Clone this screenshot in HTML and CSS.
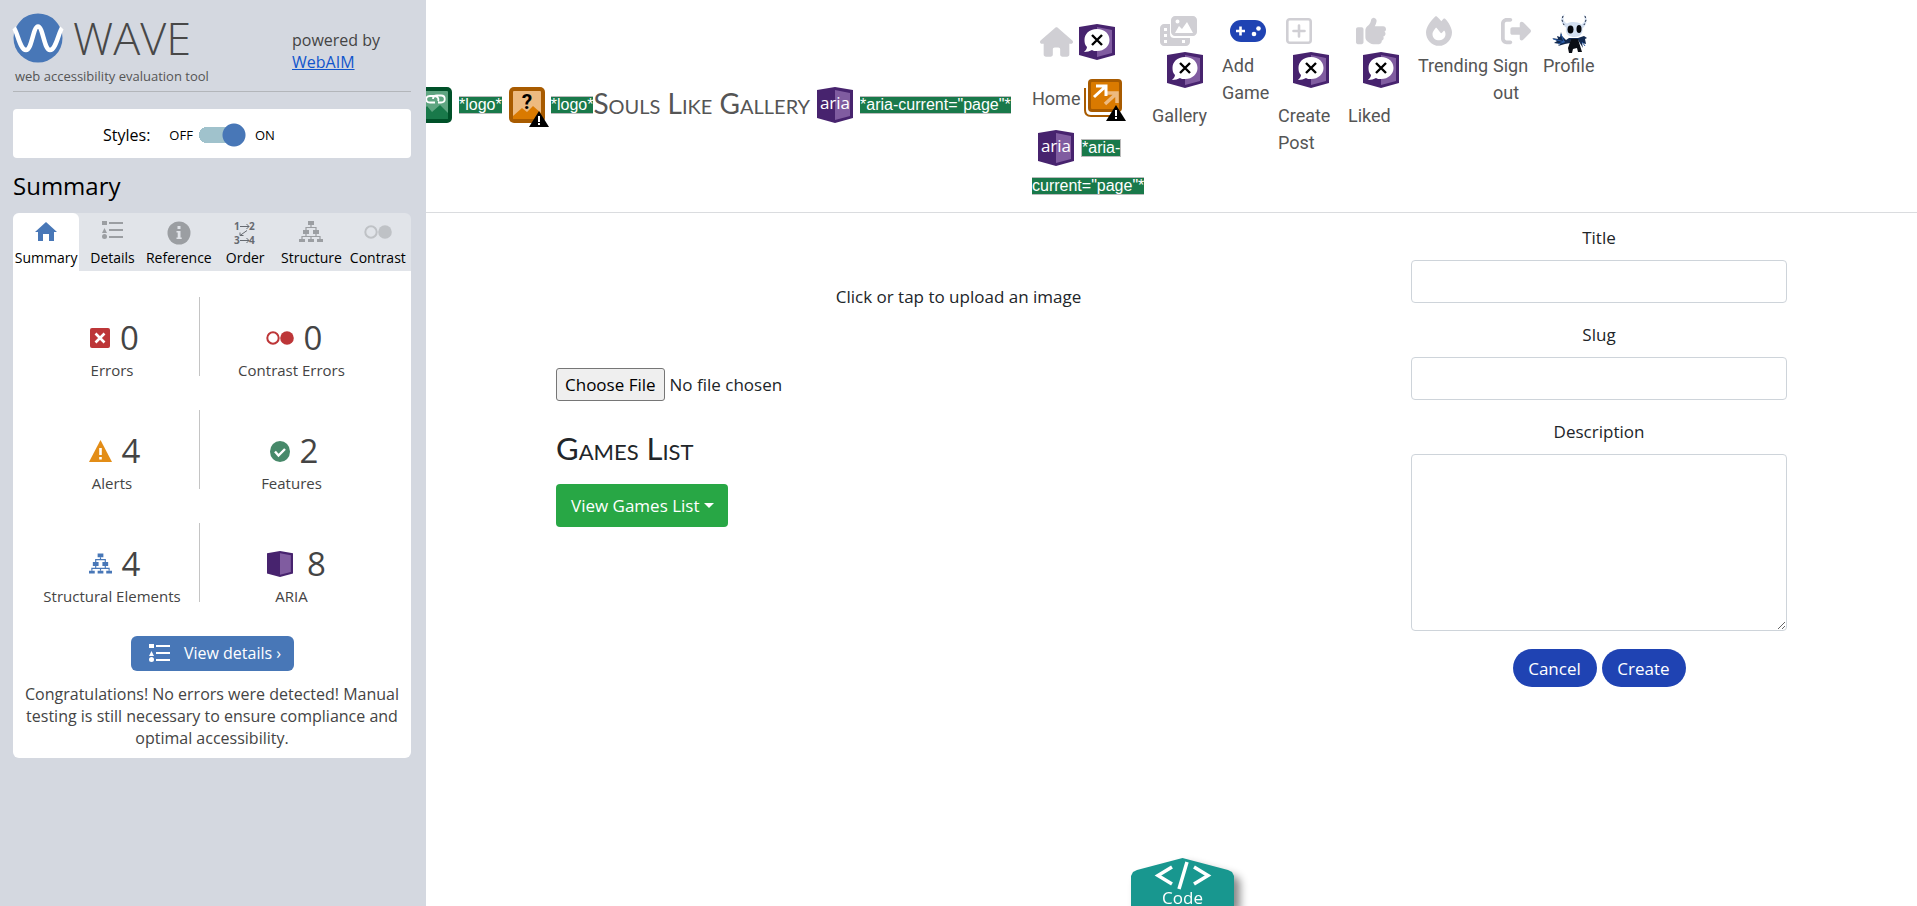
FILE: index.html
```html
<!DOCTYPE html>
<html lang="en">
<head>
<meta charset="utf-8">
<title>Souls Like Gallery</title>
<link rel="stylesheet" href="styles.css">
</head>
<body>
<svg class="defs" aria-hidden="true">
  <symbol id="list" viewBox="0 0 21 18"><path d="M0 0h5v4H0zM2.500 7l2.500 5H0zM7 1h14v2H7zM7 8h14v2H7zM7 15h14v2H7z"/><circle cx="2.500" cy="15.500" r="2.500"/></symbol>
  <symbol id="tree" viewBox="0 0 24 22"><path d="M9 0h6v4H9zM4 9h6v4H4zM14 9h6v4h-6zM0 18h6v3H0zM9 18h6v3H9zM18 18h6v3h-6z"/><path d="M12 4v3M7 9V6.500h10V9M7 13v2.500M17 13v2.500M3 18v-2.500h18V18M12 15v3" fill="none" stroke="currentColor" stroke-width="1.200"/></symbol>
  <symbol id="rings" viewBox="0 0 28 14"><circle cx="7" cy="7" r="5.700" fill="none" stroke="currentColor" stroke-width="2"/><circle cx="21" cy="7" r="6.800"/></symbol>
  <symbol id="shield" viewBox="0 0 36 36"><path d="M0 3L18 0l18 3v28l-18 5-18-5z" fill="#47236e"/><path d="M18 3l15 3v23l-15 4z" fill="#805ca0"/></symbol>
  <symbol id="aria-x" viewBox="0 0 36 36"><use href="#shield"/><path d="M18 5c8 0 12.500 5 12.500 11s-5 11-12.500 11c-2 0-4 0-5-1-2 1-5 2-8 2 1-1 3-3 3-5-2-2-2.500-4-2.500-7C5.500 10 10 5 18 5z" fill="#fff"/><path d="M13 11l10 10M23 11L13 21" stroke="#000" stroke-width="2.400"/></symbol>
  <symbol id="warn" viewBox="0 0 20 16"><path d="M10 0l10 16H0z" fill="#000"/><path d="M9 5h2v6H9zM9 12h2v2H9z" fill="#fff"/></symbol>
</svg>
<div class="layout">
<aside class="side">
  <header class="side-head">
    <div class="logo">
      <div class="logo-row">
        <svg class="logo-mark" viewBox="0 0 50 50"><circle cx="25" cy="25" r="24.500" fill="#4877b7"/><path d="M1 15C4 18 7 37 13 37S20 13.500 25 13.500 31 37 37 37 46 18 49 15" fill="none" stroke="#fff" stroke-width="4.500"/></svg>
        <span class="logo-name">WAVE</span>
      </div>
      <p class="tagline">web accessibility evaluation tool</p>
    </div>
    <p class="powered">powered by<br><a href="#">WebAIM</a></p>
  </header>
  <div class="styles-box">
    <span class="styles-label">Styles:</span>
    <label class="toggle">OFF <input type="checkbox" role="switch" checked aria-label="Styles"> ON</label>
  </div>
  <h2 class="side-title">Summary</h2>
  <nav class="tabs">
    <button class="tab active"><svg width="24" height="22" viewBox="0 0 24 22"><path d="M12 1l11 10h-3v9h-5v-7H9v7H4v-9H1z"/></svg>Summary</button>
    <button class="tab"><svg width="21" height="18"><use href="#list"/></svg>Details</button>
    <button class="tab"><svg width="24" height="24" viewBox="0 0 24 24"><circle cx="12" cy="12" r="11.500"/><path d="M10.500 5h3v3h-3zM9.500 10h4v6.500h1.200V18H9.500v-1.500h1.200v-5H9.500z" fill="#e1e4e9"/></svg>Reference</button>
    <button class="tab"><svg class="order" width="24" height="24" viewBox="0 0 24 24"><g font-family="Open Sans, sans-serif" font-size="10" font-weight="700"><text x="1" y="9">1</text><text x="16" y="9">2</text><text x="1" y="23">3</text><text x="16" y="23">4</text></g><path d="M7 5.500h9M13.500 3l2.500 2.500L13.500 8M7 19.500h9M13.500 17l2.500 2.500-2.500 2.500M14 9.500l-7 5M7 11.500v3h3.500" fill="none" stroke="currentColor"/></svg>Order</button>
    <button class="tab"><svg width="24" height="22"><use href="#tree"/></svg>Structure</button>
    <button class="tab pale"><svg width="28" height="22"><use href="#rings"/></svg>Contrast</button>
  </nav>
  <section class="panel">
    <ul class="stats">
      <li><span class="stat"><svg width="20" height="20" viewBox="0 0 20 20"><rect width="20" height="20" rx="2" fill="#bd3638"/><path d="M5.500 5.500l9 9M14.500 5.500l-9 9" stroke="#fff" stroke-width="2.600"/></svg>0</span>Errors</li>
      <li><span class="stat"><svg class="red" width="28" height="14"><use href="#rings"/></svg>0</span>Contrast Errors</li>
      <li><span class="stat"><svg width="23" height="22" viewBox="0 0 23 22"><path d="M11.500 0L23 22H0z" fill="#e38d17"/><path d="M10.200 8h2.600v7h-2.600zM10.200 17h2.600v2.500h-2.600z" fill="#fff"/></svg>4</span>Alerts</li>
      <li><span class="stat"><svg width="20" height="21" viewBox="0 0 20 21"><ellipse cx="10" cy="10.500" rx="10" ry="10.500" fill="#47896a"/><path d="M5 10.500l3.500 4L15 8" fill="none" stroke="#fff" stroke-width="2.400"/></svg>2</span>Features</li>
      <li><span class="stat"><svg class="blue" width="23" height="22"><use href="#tree"/></svg>4</span>Structural Elements</li>
      <li><span class="stat wide"><svg width="26" height="26"><use href="#shield"/></svg>8</span>ARIA</li>
    </ul>
    <button class="details"><svg width="21" height="18"><use href="#list"/></svg>View details ›</button>
    <p class="congrats">Congratulations! No errors were detected! Manual testing is still necessary to ensure compliance and optimal accessibility.</p>
  </section>
</aside>

<div class="page">
  <header class="top">
    <a class="brand" href="#">
      <svg width="36" height="36" viewBox="0 0 36 36"><rect width="36" height="36" rx="5" fill="#005129"/><rect x="4" y="4" width="28" height="28" rx="1" fill="#5fa581"/><path d="M4 27l7-8 5 6 8-7 8 8v6H4z" fill="#19794a"/><path d="M19 15.500h-5c-5 0-5-6.500 0-6.500h4c4 0 5 3 4 5M17 12c0-3 2-3.500 4-3.500h4c5 0 5 7 0 7h-3" fill="none" stroke="#fff" stroke-width="1.800"/></svg>
      <span class="tag">*logo*</span>
      <span class="flagged"><svg width="36" height="36" viewBox="0 0 36 36"><rect width="36" height="36" rx="5" fill="#a85b00"/><rect x="4" y="4" width="28" height="28" rx="1" fill="#edba80"/><path d="M4 29l9-8 5 4 6-6 8 7v6H4z" fill="#da7a00"/><text x="18" y="22" text-anchor="middle" font-family="Roboto, sans-serif" font-weight="700" font-size="21" fill="#000">?</text></svg><svg class="warn" width="20" height="16"><use href="#warn"/></svg></span>
      <span class="name"><span class="tag">*logo*</span><span class="site">Souls Like Gallery</span></span>
      <svg width="36" height="36"><use href="#shield"/><text class="aria-text" x="18" y="22" text-anchor="middle">aria</text></svg>
      <span class="tag">*aria-current="page"*</span>
    </a>
    <nav class="menu">
      <a href="#" class="item home">
        <span class="pair"><svg class="fa" width="33" height="30" viewBox="0 0 576 512"><path d="M575.800 255.500c0 18-15 32.100-32 32.100h-32l.7 160.200c0 2.700-.2 5.400-.5 8.100V472c0 22.100-17.900 40-40 40H392c-22.100 0-40-17.900-40-40v-88c0-17.700-14.300-32-32-32h-64c-17.700 0-32 14.300-32 32v88c0 22.100-17.900 40-40 40h-80c-22.100 0-40-17.900-40-40V287.600H32c-18 0-32-14-32-32.100 0-9 3-17 10-24L266.400 8c7-7 15-8 22-8s15 2 21 7L564.800 231.500c8 7 12 15 11 24z"/></svg><svg width="36" height="36"><use href="#aria-x"/></svg></span>
        <span class="home-label">Home <span class="flagged"><svg width="38" height="38" viewBox="0 0 38 38"><path d="M1 9v22c0 4 2 6 6 6h22" fill="none" stroke="#a85b00" stroke-width="2"/><rect x="4" width="34" height="33" rx="4" fill="#a85b00"/><rect x="7" y="3" width="28" height="27" rx="1" fill="#da7a00"/><path d="M21 25l11-10M23 14h10v10" fill="none" stroke="#edba80" stroke-width="3.500"/><path d="M10 18L21 8M12 7h10v10" fill="none" stroke="#fff" stroke-width="3"/></svg><svg class="warn" width="20" height="16"><use href="#warn"/></svg></span></span>
        <span class="aria-label-line"><svg width="36" height="36"><use href="#shield"/><text class="aria-text" x="18" y="22" text-anchor="middle">aria</text></svg><span class="tag">*aria-</span></span>
        <span class="tag">current="page"*</span>
      </a>
      <a href="#" class="item"><svg class="fa" width="38" height="30" viewBox="0 0 38 30"><path d="M4 8h6v10c0 3 2 4 4 4h16v4c0 2-2 4-4 4H4c-2 0-4-2-4-4V12c0-2 2-4 4-4zM4 12v3h3v-3zM4 18v3h3v-3zM4 24v3h3v-3zM22 24v3h3v-3z" fill-rule="evenodd"/><path d="M15 0h18c2 0 4 2 4 4v12c0 2-2 4-4 4H15c-2 0-4-2-4-4V4c0-2 2-4 4-4zM15 17h18l-6-11-5 7-3-3zM17.500 3.500a2 2 0 100 4 2 2 0 000-4z" fill-rule="evenodd"/></svg><svg class="x" width="36" height="36"><use href="#aria-x"/></svg><span class="label">Gallery</span></a>
      <a href="#" class="item"><svg class="fa current" width="36" height="30" viewBox="0 0 36 30"><rect y="4" width="36" height="22" rx="11"/><path d="M6 15h9M10.500 10.500v9" stroke="#fff" stroke-width="2.600"/><circle cx="24" cy="18" r="2.300" fill="#fff"/><circle cx="28.500" cy="12.500" r="2.300" fill="#fff"/></svg><span class="label">Add Game</span></a>
      <a href="#" class="item"><svg class="fa" width="26" height="30" viewBox="0 0 26 30"><rect x="1.300" y="3.300" width="23.400" height="23.400" rx="2.500" fill="none" stroke="currentColor" stroke-width="2.600"/><path d="M7.500 15h11M13 9.500v11" stroke="currentColor" stroke-width="2.600" stroke-linecap="round"/></svg><svg class="x" width="36" height="36"><use href="#aria-x"/></svg><span class="label">Create Post</span></a>
      <a href="#" class="item"><svg class="fa" width="30" height="30" viewBox="0 0 512 512"><path d="M313.400 32.900c26 5.200 42.900 30.500 37.700 56.500l-2.300 11.400c-5.300 26.700-15.100 52.100-28.800 75.200H464c26.500 0 48 21.500 48 48 0 18.500-10.500 34.600-25.900 42.600C497 275.400 504 288.900 504 304c0 23.400-16.800 42.900-38.900 47.100 4.400 7.300 6.900 15.800 6.900 24.900 0 21.300-13.900 39.400-33.100 45.600.7 3.300 1.100 6.800 1.100 10.400 0 26.500-21.500 48-48 48h-97.500c-19 0-37.500-5.600-53.300-16.100l-38.500-25.700C176 420.400 160 390.400 160 358.300V247.100c0-29.200 13.300-56.700 36-75l7.400-5.900c26.500-21.200 44.600-51 51.200-84.200l2.300-11.400c5.200-26 30.500-42.900 56.500-37.700zM32 192h64c17.700 0 32 14.300 32 32v224c0 17.700-14.300 32-32 32H32c-17.700 0-32-14.300-32-32V224c0-17.700 14.300-32 32-32z"/></svg><svg class="x" width="36" height="36"><use href="#aria-x"/></svg><span class="label">Liked</span></a>
      <a href="#" class="item"><svg class="fa" width="26" height="30" viewBox="0 0 448 512"><path d="M159.300 5.400c7.800-7.300 19.900-7.200 27.700.1 27.600 25.900 53.500 53.800 77.700 84 11-14.400 23.500-30.100 37-42.900 7.900-7.400 20.100-7.400 28 .1 34.600 33 63.900 76.600 84.500 118 20.300 40.800 33.800 82.500 33.800 111.900C448 404.200 348.200 512 224 512 98.400 512 0 404.100 0 276.500c0-38.400 17.800-85.300 45.400-131.700C73.300 97.700 112.700 48.600 159.300 5.400zM225.700 416c25.300 0 47.700-7 68.800-21 42.100-29.400 53.400-88.200 28.100-134.400-4.500-9-16-9.600-22.500-2l-25.200 29.300c-6.600 7.600-18.500 7.400-24.700-.5-16.500-21-46-58.500-62.800-79.800-6.300-8-18.300-8.100-24.700-.1-33.800 42.500-50.800 69.300-50.800 99.400C112 375.400 162.600 416 225.700 416z"/></svg><span class="label">Trending</span></a>
      <a href="#" class="item"><svg class="fa" width="30" height="30" viewBox="0 0 512 512"><path d="M377.900 105.900L500.700 228.700c7.200 7.200 11.300 17.100 11.300 27.300s-4.100 20.100-11.300 27.300L377.900 406.100c-6.400 6.400-15 9.900-24 9.900-18.700 0-33.900-15.200-33.900-33.900V320H192c-17.700 0-32-14.300-32-32v-64c0-17.700 14.300-32 32-32h128v-62.100c0-18.700 15.200-33.900 33.900-33.900 9 0 17.600 3.600 24 9.900zM160 96H96c-17.700 0-32 14.300-32 32v256c0 17.700 14.300 32 32 32h64c17.700 0 32 14.300 32 32s-14.300 32-32 32H96c-53 0-96-43-96-96V128C0 75 43 32 96 32h64c17.700 0 32 14.300 32 32s-14.300 32-32 32z"/></svg><span class="label">Sign out</span></a>
      <a href="#" class="item"><svg class="knight" width="38" height="40" viewBox="0 0 38 40"><path d="M17 24l-3 2-4-4-1-4-1 5-3-1 1 3-6-1 5 3-3 2 6 1-2 2 7-2 5-1 1-3h7l5 8-1-5 4 1-1-5 2-1-3-2-6 2z" fill="#12294f"/><path d="M1 25l12 3M9 20l3 8M30 28l3 4M6 30l6-2" stroke="#2b5da8" fill="none"/><path d="M19 25h7l4 13h-4l-1-4-4 1-1 4h-3l-1-5z" fill="#0a0d14"/><path d="M15 9.500c-4-2-4.500-6-2-9.500-5 2-5.500 9 1 13.500-1 7 3 9.500 8.500 9.500s8.500-3 8-8.500c5-4 6-12 1-14 2 4 2 7-2 10-4-3-10-3-14.500-1z" fill="#d3dff0"/><path d="M11 2l-1 4 2 5M33 2l1 4-2 5" stroke="#1d2941" fill="none" stroke-dasharray="2 2"/><ellipse cx="18.500" cy="15.500" rx="3" ry="4" fill="#05070c"/><ellipse cx="27" cy="15" rx="2.500" ry="4" fill="#05070c"/></svg><span class="label">Profile</span></a>
    </nav>
  </header>
  <main>
    <form class="post">
      <div class="upload">
        <label for="image" class="hint">Click or tap to upload an image</label>
        <input id="image" class="file" type="file">
        <h3 class="list-title">Games List</h3>
        <button type="button" class="dropdown">View Games List</button>
      </div>
      <div class="fields">
        <label for="title">Title</label>
        <input id="title" class="field" type="text">
        <label for="slug">Slug</label>
        <input id="slug" class="field" type="text">
        <label for="description">Description</label>
        <textarea id="description" class="field area"></textarea>
        <div class="actions"><button type="button">Cancel</button><button type="button">Create</button></div>
      </div>
    </form>
  </main>
  <button class="code"><svg width="56" height="28" viewBox="0 0 56 28"><path d="M17 5L3 13.500 17 22M39 5l14 8.500L39 22M32 0l-8 27" fill="none" stroke="#fff" stroke-width="3.500"/></svg>Code</button>
</div>
</div>
</body>
</html>
```
FILE: styles.css
```css
* { box-sizing: border-box; }
body { margin: 0; background: #fff; font-family: "Open Sans", sans-serif; }
p, h2, h3, ul { margin: 0; padding: 0; font-weight: 400; }
button { font: inherit; border: 0; padding: 0; }
svg { display: block; flex: none; fill: currentColor; overflow: visible; }
.defs { position: absolute; width: 0; height: 0; }
.layout { display: grid; grid-template-columns: 426px 1fr; height: 100vh; overflow: hidden; }

.side { background: #d4d8e0; padding: 12px 15px 0 13px; color: #444; }
.side-head { display: flex; height: 80px; border-bottom: 1px solid #b3b6ba; }
.logo { width: 279px; }
.logo-row { display: flex; gap: 10px; height: 52px; align-items: center; }
.logo-mark { width: 50px; height: 50px; }
.logo-name { font-size: 45px; font-weight: 300; line-height: 64px; color: #484848; }
.tagline { font-size: 13px; line-height: 20px; padding: 2px 2px 0; color: #555; white-space: nowrap; }
.powered { font-size: 16px; line-height: 22px; padding-top: 17px; }
.powered a { color: #1155cc; }
.styles-box { margin-top: 17px; height: 49px; border-radius: 4px; background: #fff; color: #000; display: flex; align-items: center; padding-left: 90px; gap: 19px; }
.styles-label { font-size: 16px; padding-top: 2px; }
.toggle { display: flex; align-items: center; gap: 6px; font-size: 13px; padding-top: 2px; }
.toggle input { appearance: none; margin: 0 2px 0 0; width: 48px; height: 24px; background: radial-gradient(circle at 35px 12px, #4877b7 11px, transparent 12px), linear-gradient(#a0c2cc, #a0c2cc) 8px 4px / 30px 16px no-repeat, radial-gradient(circle at 8px 12px, #a0c2cc 8px, transparent 8px); }
.side-title { font-size: 24px; line-height: 32px; color: #000; margin: 12px 0 11px; }
.tabs { display: grid; grid-template-columns: repeat(6, 1fr); height: 58px; background: #e1e4e9; border-radius: 6px 6px 0 0; }
.tab { display: flex; flex-direction: column; align-items: center; justify-content: space-between; padding: 8px 0 0; background: none; font-size: 14px; line-height: 26px; color: #000; white-space: nowrap; border-radius: 6px 6px 0 0; }
.tab svg { color: #9b9ea2; }
.tab .order { color: #666a70; }
.tab.pale svg { color: #bfc2c6; }
.tab.active { background: #fff; }
.tab.active svg { color: #4877b7; }
.panel { background: #fff; border-radius: 0 0 6px 6px; padding: 26px 12px 3px; display: flex; flex-direction: column; align-items: center; }
.stats { list-style: none; align-self: stretch; display: grid; grid-template-columns: 175px 183px; row-gap: 34px; }
.stats li { height: 79px; display: flex; flex-direction: column; align-items: center; font-size: 15px; line-height: 20px; white-space: nowrap; }
.stats li:nth-child(odd) { border-right: 1px solid #c4c4c4; }
.stat { display: flex; align-items: center; gap: 10px; font-size: 33px; line-height: 44px; padding: 19px 0 0 5px; }
.stat.wide { gap: 14px; padding-left: 10px; }
.red { color: #bd3638; }
.blue { color: #4877b7; }
.details { margin-top: 34px; width: 163px; height: 35px; border-radius: 6px; background: #4877b7; color: #fff; font-size: 16px; line-height: 32px; display: flex; align-items: center; justify-content: center; gap: 14px; padding: 0 0 1px 6px; white-space: nowrap; }
.congrats { margin-top: 12px; font-size: 16px; line-height: 22px; padding-bottom: 6px; text-align: center; }

.page { position: relative; overflow: hidden; color: #212529; }
.top { display: grid; grid-template-columns: 596px 1fr; gap: 20px; margin-left: -10px; height: 213px; border-bottom: 1px solid #dadcdf; align-items: center; }
.brand { display: flex; align-items: center; gap: 7px; padding-bottom: 3px; color: #555; text-decoration: none; white-space: nowrap; }
.brand .flagged { margin-right: -1px; }
.name { display: flex; align-items: center; }
.site { font-family: Lato, sans-serif; font-variant: small-caps; font-size: 28px; line-height: 32px; padding-bottom: 4px; }
.tag { background: #19794a; border: 1px solid #bbb; color: #fff; font: 16px/16px "Liberation Sans", Arial, sans-serif; white-space: nowrap; }
.brand .tag { border-width: 1px 0; }
.aria-text { font: 17px "Open Sans", sans-serif; fill: #fff; }
.flagged { position: relative; display: inline-block; }
.warn { position: absolute; right: -4px; bottom: -4px; }
.menu { display: grid; grid-template-columns: 120px 70px 56px 70px 70px 75px 50px 60px; align-self: start; padding-top: 16px; }
.item { color: #555; text-decoration: none; font-family: Roboto, sans-serif; font-size: 18px; line-height: 27px; }
.fa { color: #d0cfd4; margin-left: 8px; }
.fa.current { color: #1f43b3; }
.x { margin: 6px 0 0 15px; }
.x + .label { margin-top: 14px; }
.label { display: block; margin-top: 6px; }
.knight { margin: -2px 0 -8px 9px; }
.home { display: flex; flex-direction: column; align-items: flex-start; padding-top: 8px; }
.home > .tag { border-width: 1px 0; }
.pair { display: flex; align-items: center; gap: 6px; }
.home-label { display: flex; align-items: center; gap: 4px; margin-top: 19px; }
.aria-label-line { display: flex; align-items: center; gap: 7px; margin: 13px 0 11px 6px; }

.post { display: grid; grid-template-columns: 805fr 376fr; gap: 50px; padding: 11px 130px 0; font-size: 17px; line-height: 27px; }
.upload { display: flex; flex-direction: column; align-items: flex-start; padding-top: 59px; }
.hint { align-self: center; }
.file { margin-top: 58px; font: inherit; line-height: 27px; }
.file::file-selector-button { font: inherit; height: 33px; padding: 0 8px; border: 1px solid #767676; border-radius: 3px; background: #efefef; color: #000; margin-right: 5px; }
.list-title { font-family: Lato, sans-serif; font-variant: small-caps; font-size: 31px; line-height: 36px; margin: 29px 0 18px; }
.dropdown { height: 43px; padding: 0 14px 0 15px; border-radius: 4px; background: #28a745; color: #fff; }
.dropdown::after { content: ""; display: inline-block; margin-left: 4px; vertical-align: 4px; border: 5px solid transparent; border-top-color: #fff; border-bottom: 0; }
.fields { display: flex; flex-direction: column; text-align: center; }
.field { height: 43px; margin: 9px 0 18px; border: 1px solid #ced4da; border-radius: 4px; font: inherit; padding: 6px 12px; width: 100%; }
.area { height: 177px; }
.actions { display: flex; justify-content: center; gap: 5px; }
.actions button { width: 84px; height: 38px; border-radius: 19px; background: #1f43b3; color: #fff; }
.code { position: absolute; left: 705px; bottom: 0; width: 103px; height: 48px; padding-top: 4px; background: none; color: #fff; font-size: 17px; line-height: 16px; display: flex; flex-direction: column; align-items: center; filter: drop-shadow(6px 6px 4px #888); }
.code::before { content: ""; position: absolute; inset: 0; z-index: -1; background: #18978f; clip-path: polygon(0 18px, 2px 14px, 6px 12px, 50% 0, 97px 12px, 101px 14px, 103px 18px, 103px 100%, 0 100%); }
```
